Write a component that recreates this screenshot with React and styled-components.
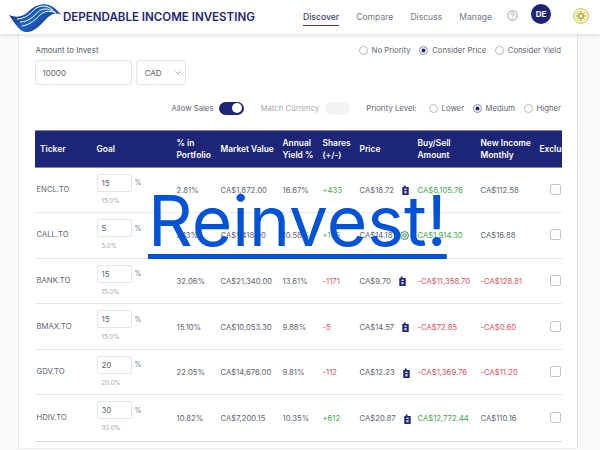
import styled, { createGlobalStyle } from "styled-components";

const rows = [
  { ticker: "ENCL.TO", goal: 15, pct: "2.81%", value: "CA$1,872.00", yld: "16.67%", shares: "+433", price: "CA$18.72", icon: "doc", amount: "CA$8,105.76", income: "CA$112.58", incomeDown: false },
  { ticker: "CALL.TO", goal: 5, pct: "2.13%", value: "CA$1,418.00", yld: "10.58%", shares: "+135", price: "CA$14.18", icon: "coin", amount: "CA$1,914.30", income: "CA$16.88", incomeDown: false },
  { ticker: "BANK.TO", goal: 15, pct: "32.06%", value: "CA$21,340.00", yld: "13.61%", shares: "-1171", price: "CA$9.70", icon: "doc", amount: "-CA$11,358.70", income: "-CA$128.81", incomeDown: true },
  { ticker: "BMAX.TO", goal: 15, pct: "15.10%", value: "CA$10,053.30", yld: "9.88%", shares: "-5", price: "CA$14.57", icon: "doc", amount: "-CA$72.85", income: "-CA$0.60", incomeDown: true },
  { ticker: "GDV.TO", goal: 20, pct: "22.05%", value: "CA$14,676.00", yld: "9.81%", shares: "-112", price: "CA$12.23", icon: "doc", amount: "-CA$1,369.76", income: "-CA$11.20", incomeDown: true },
  { ticker: "HDIV.TO", goal: 30, pct: "10.82%", value: "CA$7,200.15", yld: "10.35%", shares: "+612", price: "CA$20.87", icon: "doc", amount: "CA$12,772.44", income: "CA$110.16", incomeDown: false },
];

function Logo() {
  return (
    <svg width="54" height="30" viewBox="0 0 54 30">
      <defs>
        <linearGradient id="wave" x1="0" y1="0" x2="1" y2="0.6">
          <stop offset="0" stopColor="#14236e" />
          <stop offset="0.55" stopColor="#1c64c8" />
          <stop offset="1" stopColor="#14307e" />
        </linearGradient>
      </defs>
      <path
        d="M0 13C8 16 14 15 20 9C25 4 33 1 40 3C46 5 49 10 53 13C47 10 42 12 37 17C31 24 24 31 16 30C10 29 5 20 0 13Z"
        fill="url(#wave)"
      />
      <g fill="none" stroke="#fff" strokeWidth="1">
        <path d="M8 17C16 17 21 12 26 7C31 3 38 3 44 8" />
        <path d="M11 20C19 20 24 15 29 10C33 6 39 6 46 10" />
        <path d="M13 24C21 23 27 17 31 13C35 9 40 8 47 11" />
      </g>
    </svg>
  );
}

function HelpIcon() {
  return (
    <svg width="11" height="11" viewBox="0 0 12 12" fill="none" stroke="#8a8f9c" strokeWidth="1">
      <circle cx="6" cy="6" r="5.2" />
      <path d="M4.4 4.7C4.5 3.7 5.2 3.2 6 3.2C6.9 3.2 7.6 3.8 7.6 4.6C7.6 5.6 6 5.8 6 7" />
      <path d="M6 8.2V9" />
    </svg>
  );
}

function SunIcon() {
  return (
    <svg width="16" height="16" viewBox="0 0 16 16">
      <circle cx="8" cy="8" r="7.5" fill="#fbf8a6" stroke="#b5b48c" strokeWidth="0.8" />
      <circle cx="8" cy="8" r="2.6" fill="none" stroke="#6a6a50" strokeWidth="0.8" />
      <g stroke="#6a6a50" strokeWidth="0.8" strokeLinecap="round">
        <path d="M8 3.2V3.9M8 12.1V12.8M3.2 8H3.9M12.1 8H12.8M4.6 4.6L5.1 5.1M10.9 10.9L11.4 11.4M4.6 11.4L5.1 10.9M10.9 5.1L11.4 4.6" />
      </g>
    </svg>
  );
}

function DocIcon() {
  return (
    <svg width="7" height="10" viewBox="0 0 7 10">
      <path d="M0.3 2H1.8V0.5H3.6V2H6.7V10H0.3Z" fill="#1c2577" />
      <rect x="2.4" y="3.6" width="2.2" height="1.3" fill="#fff" />
      <rect x="2.4" y="6" width="2.2" height="2.4" fill="#c9cdea" />
    </svg>
  );
}

function CoinIcon() {
  return (
    <svg width="9" height="9" viewBox="0 0 9 9" fill="none" stroke="#2e8b45" strokeWidth="1">
      <circle cx="4.5" cy="4.5" r="3.9" />
      <circle cx="4.5" cy="4.5" r="1.7" />
    </svg>
  );
}

function Radio({ label, on }) {
  return (
    <RadioLabel>
      <RadioDot $on={on} />
      {label}
    </RadioLabel>
  );
}

export default function App() {
  return (
    <>
      <GlobalStyle />
      <Header>
        <Brand>
          <Logo />
          <Title>DEPENDABLE INCOME INVESTING</Title>
        </Brand>
        <Nav>
          <NavLink $active>Discover</NavLink>
          <NavLink>Compare</NavLink>
          <NavLink>Discuss</NavLink>
          <NavLink>Manage</NavLink>
        </Nav>
        <HelpSlot>
          <HelpIcon />
        </HelpSlot>
        <Avatar>DE</Avatar>
        <SunSlot>
          <SunIcon />
        </SunSlot>
      </Header>
      <Panel>
        <TopRow>
          <div>
            <FieldLabel>Amount to Invest</FieldLabel>
            <Fields>
              <AmountBox>10000</AmountBox>
              <CurrencyBox>
                CAD
                <svg width="6" height="4" viewBox="0 0 6 4" fill="none" stroke="#8a8f9c" strokeWidth="0.8">
                  <path d="M0.5 0.5L3 3L5.5 0.5" />
                </svg>
              </CurrencyBox>
            </Fields>
          </div>
          <RadioGroup>
            <Radio label="No Priority" />
            <Radio label="Consider Price" on />
            <Radio label="Consider Yield" />
          </RadioGroup>
        </TopRow>
        <OptionsRow>
          <OptionLabel>Allow Sales</OptionLabel>
          <Toggle $on />
          <OptionLabel $muted>Match Currency</OptionLabel>
          <Toggle />
          <PriorityLabel>Priority Level:</PriorityLabel>
          <RadioGroup>
            <Radio label="Lower" />
            <Radio label="Medium" on />
            <Radio label="Higher" />
          </RadioGroup>
        </OptionsRow>
        <Table>
          <HeadRow>
            <HeadCell $first>Ticker</HeadCell>
            <HeadCell>Goal</HeadCell>
            <HeadCell>% in Portfolio</HeadCell>
            <HeadCell>Market Value</HeadCell>
            <HeadCell>Annual Yield %</HeadCell>
            <HeadCell>Shares (+/-)</HeadCell>
            <HeadCell>Price</HeadCell>
            <HeadCell>Buy/Sell Amount</HeadCell>
            <HeadCell>New Income Monthly</HeadCell>
            <HeadCell $nowrap>Exclude</HeadCell>
          </HeadRow>
          {rows.map((row) => {
            const sell = row.shares.startsWith("-");
            return (
              <BodyRow key={row.ticker}>
                <TickerCell>{row.ticker}</TickerCell>
                <GoalCell>
                  <GoalInputRow>
                    <GoalInput>{row.goal}</GoalInput>
                    <PercentSign>%</PercentSign>
                  </GoalInputRow>
                  <GoalHint>{row.goal.toFixed(1)}%</GoalHint>
                </GoalCell>
                <Cell>{row.pct}</Cell>
                <Cell>{row.value}</Cell>
                <Cell>{row.yld}</Cell>
                <Cell $tone={sell ? "down" : "up"}>{row.shares}</Cell>
                <PriceCell>
                  {row.price}
                  {row.icon === "coin" ? <CoinIcon /> : <DocIcon />}
                </PriceCell>
                <Cell $tone={sell ? "down" : "up"}>{row.amount}</Cell>
                <Cell $tone={row.incomeDown ? "down" : undefined}>{row.income}</Cell>
                <CheckCell>
                  <CheckBox />
                </CheckCell>
              </BodyRow>
            );
          })}
        </Table>
        <Reinvest href="#">Reinvest!</Reinvest>
      </Panel>
    </>
  );
}

const GlobalStyle = createGlobalStyle`
  html, body {
    margin: 0;
    height: 450px;
    overflow: hidden;
    background: #fafafa;
    font-family: Inter, "Liberation Sans", sans-serif;
  }
`;

const Header = styled.header`
  display: flex;
  align-items: center;
  height: 34px;
  background: #fff;
  box-shadow: 0 1px 5px rgba(0, 0, 0, 0.14);
  position: relative;
  z-index: 1;
`;

const Brand = styled.div`
  display: flex;
  align-items: center;
  padding-left: 9px;
  width: 303px;
  box-sizing: border-box;
`;

const Title = styled.span`
  font-size: 11.55px;
  font-weight: 600;
  color: #1c2577;
  white-space: nowrap;
`;

const Nav = styled.nav`
  display: flex;
  gap: 17px;
`;

const NavLink = styled.a`
  font-size: 8.6px;
  font-weight: ${(p) => (p.$active ? 500 : 400)};
  color: ${(p) => (p.$active ? "#3a4172" : "#757a8a")};
  padding: 4px 0 3px;
  border-bottom: 1px solid ${(p) => (p.$active ? "#3a4172" : "transparent")};
`;

const HelpSlot = styled.div`
  display: flex;
  margin: -4px 0 0 15px;
`;

const Avatar = styled.div`
  display: flex;
  align-items: center;
  justify-content: center;
  width: 20px;
  height: 20px;
  margin: -6px 0 0 13px;
  border-radius: 50%;
  background: #1c2577;
  color: #fff;
  font-size: 8px;
  font-weight: 700;
`;

const SunSlot = styled.div`
  display: flex;
  margin: -3px 0 0 22px;
`;

const Panel = styled.main`
  position: relative;
  box-sizing: border-box;
  width: 560px;
  height: 415px;
  margin-left: 18px;
  padding: 11px 16px 0 15.5px;
  background: #fff;
  border-left: 1px solid #e6e6e8;
  border-right: 1px solid #e6e6e8;
  border-bottom: 1px solid #f0f0f2;
`;

const TopRow = styled.div`
  display: flex;
  justify-content: space-between;
  align-items: flex-start;
`;

const FieldLabel = styled.div`
  font-size: 7.9px;
  line-height: 11px;
  color: #555a66;
  padding-left: 1px;
`;

const Fields = styled.div`
  display: flex;
  gap: 4px;
  margin-top: 4px;
`;

const AmountBox = styled.div`
  box-sizing: border-box;
  width: 97px;
  height: 25px;
  padding: 0 7px;
  line-height: 24px;
  font-size: 8px;
  color: #5a5f6b;
  border: 1px solid #e4e5e8;
  border-radius: 3px;
`;

const CurrencyBox = styled(AmountBox)`
  display: flex;
  align-items: center;
  justify-content: space-between;
  width: 50px;
  padding: 0 4px 0 8px;
`;

const RadioGroup = styled.div`
  display: flex;
  gap: 8.5px;
`;

const RadioLabel = styled.label`
  display: flex;
  align-items: center;
  gap: 4px;
  font-size: 7.75px;
  line-height: 11px;
  color: #5f6470;
  white-space: nowrap;
`;

const RadioDot = styled.span`
  box-sizing: border-box;
  width: 9px;
  height: 9px;
  border-radius: 50%;
  border: 1px solid #b9bcc4;
  background: ${(p) => (p.$on ? "#1c2577" : "#fff")};
  box-shadow: ${(p) => (p.$on ? "inset 0 0 0 1.5px #fff" : "none")};
`;

const OptionsRow = styled.div`
  display: flex;
  justify-content: flex-end;
  align-items: center;
  height: 14px;
  margin-top: 16px;
`;

const OptionLabel = styled.span`
  font-size: 7.75px;
  color: ${(p) => (p.$muted ? "#a8abb3" : "#5f6470")};
  margin-left: ${(p) => (p.$muted ? "16px" : "0")};
`;

const PriorityLabel = styled.span`
  font-size: 7.75px;
  color: #5f6470;
  margin: 0 12px 0 16px;
`;

const Toggle = styled.span`
  display: flex;
  align-items: center;
  justify-content: flex-end;
  box-sizing: border-box;
  width: 25px;
  height: 13px;
  margin-left: 6px;
  padding: 0 2px;
  border-radius: 7px;
  background: ${(p) => (p.$on ? "#1c2577" : "#f3f3f4")};

  &::after {
    content: "";
    width: 10px;
    height: 10px;
    border-radius: 50%;
    background: ${(p) => (p.$on ? "#fff" : "transparent")};
  }
`;

const Table = styled.div`
  margin-top: 15px;
  width: 527px;
  overflow: hidden;
  border-bottom: 1px solid #d9d9dc;
`;

const columns = "62px 80px 44px 62px 40px 37px 58px 63px 59px 22px";

const HeadRow = styled.div`
  display: grid;
  grid-template-columns: ${columns};
  height: 37.5px;
  background: #1c2577;
  border: 1px solid #7d82a8;
  border-width: 1px 0;
  box-sizing: border-box;
`;

const HeadCell = styled.div`
  align-self: center;
  padding-left: ${(p) => (p.$first ? "5.5px" : "0")};
  font-size: 8.4px;
  font-weight: 600;
  line-height: 12px;
  color: #fff;
  white-space: ${(p) => (p.$nowrap ? "nowrap" : "normal")};
`;

const BodyRow = styled.div`
  display: grid;
  grid-template-columns: ${columns};
  height: 45.6px;
  box-sizing: border-box;
  border-bottom: 1px solid #e8e8ea;

  &:last-child {
    border-bottom: none;
  }
`;

const toneColors = { up: "#3fa652", down: "#e4505f" };

const Cell = styled.div`
  align-self: center;
  padding-top: 1px;
  font-size: 7.7px;
  white-space: nowrap;
  color: ${(p) => toneColors[p.$tone] || "#60646f"};
`;

const TickerCell = styled(Cell)`
  padding: 0 0 1px 2px;
`;

const PriceCell = styled(Cell)`
  display: flex;
  align-items: center;
  gap: 8px;
`;

const GoalCell = styled.div`
  padding-top: 6px;
`;

const GoalInputRow = styled.div`
  display: flex;
  align-items: center;
  gap: 3px;
`;

const GoalInput = styled.div`
  box-sizing: border-box;
  width: 35px;
  height: 18px;
  padding-left: 4px;
  line-height: 16px;
  font-size: 7.9px;
  color: #60646f;
  border: 1px solid #e4e5e8;
  border-radius: 2px;
`;

const PercentSign = styled.span`
  font-size: 7px;
  color: #7a7e89;
`;

const GoalHint = styled.div`
  margin: 5px 0 0 5px;
  font-size: 6.2px;
  color: #a5a8b0;
`;

const CheckCell = styled.div`
  align-self: center;
  padding: 0 0 1px 10px;
`;

const CheckBox = styled.div`
  box-sizing: border-box;
  width: 11px;
  height: 11px;
  border: 1px solid #c4c5ca;
  border-radius: 2px;
`;

const Reinvest = styled.a`
  position: absolute;
  left: 129px;
  top: 145px;
  font-size: 69.5px;
  line-height: 84px;
  color: #0052d9;
  text-decoration: underline;
  text-decoration-thickness: 5px;
  text-underline-offset: 8px;
  white-space: nowrap;
`;
